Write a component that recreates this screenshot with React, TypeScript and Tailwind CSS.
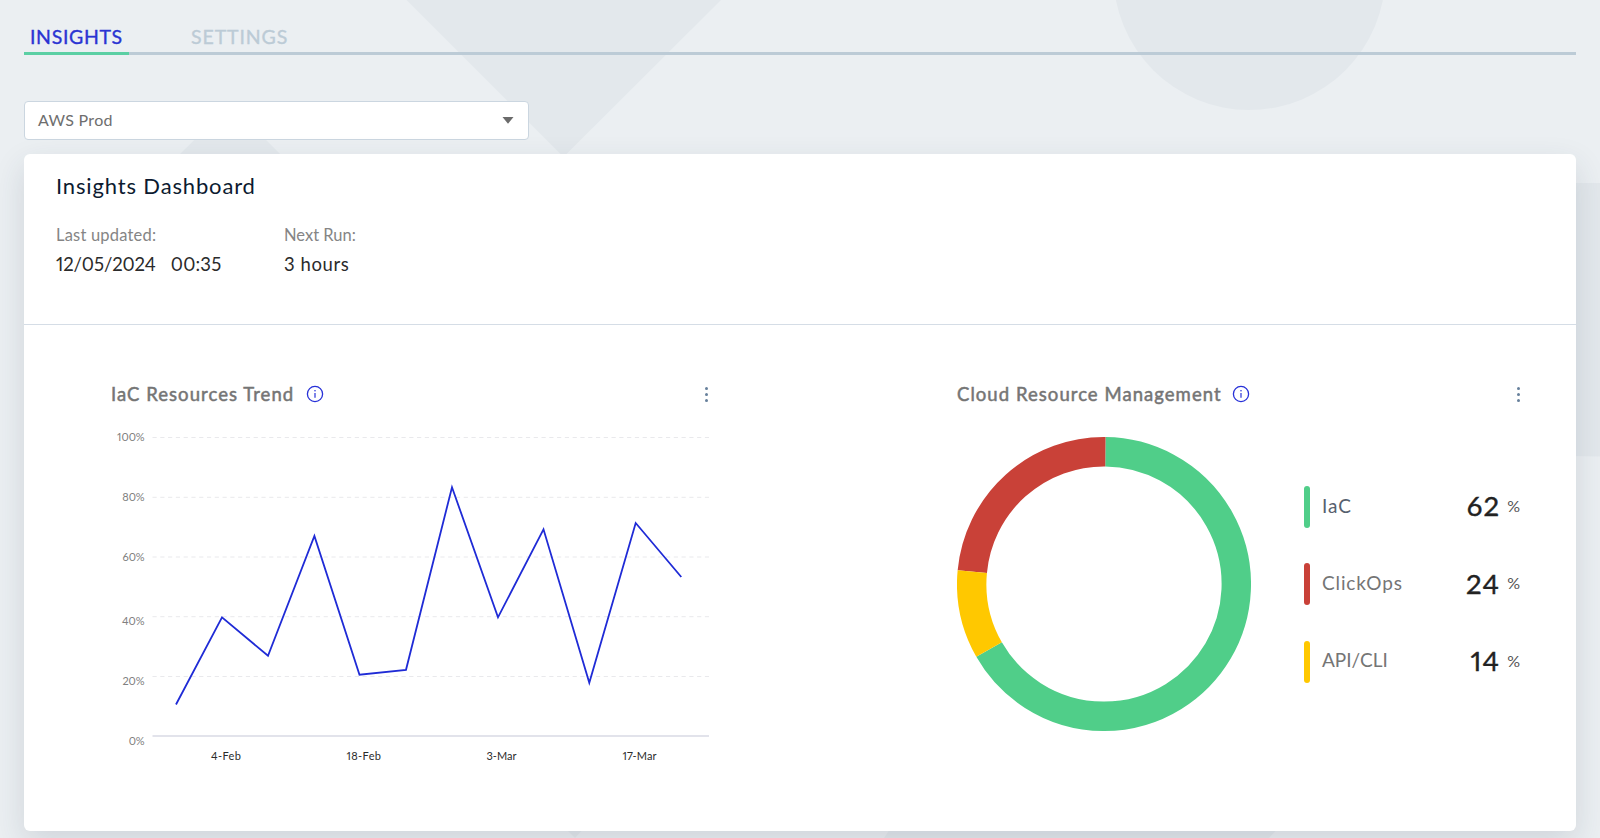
import { useState } from "react";

interface Slice {
  label: string;
  value: number;
  color: string;
  barClass: string;
  labelClass: string;
  from: number;
  to: number;
}

const tabs = [
  { name: "INSIGHTS", width: "w-[105px]", tracking: "tracking-[0.65px]" },
  { name: "SETTINGS", width: "w-[106px]", tracking: "tracking-[0.9px]" },
];

const slices: Slice[] = [
  {
    label: "IaC",
    value: 62,
    color: "#50ce89",
    barClass: "bg-[#50ce89]",
    labelClass: "text-[#56606e] tracking-[1px]",
    from: 0.6,
    to: 240.3,
  },
  {
    label: "ClickOps",
    value: 24,
    color: "#c94138",
    barClass: "bg-[#c94138]",
    labelClass: "text-[#757575] tracking-[0.85px]",
    from: 275.4,
    to: 360.6,
  },
  {
    label: "API/CLI",
    value: 14,
    color: "#ffc800",
    barClass: "bg-[#ffc800]",
    labelClass: "text-[#757575]",
    from: 240.3,
    to: 275.4,
  },
];

// Horizontal grid lines with the y of their labels
const gridLines = [
  { label: "100%", y: 437.5, textY: 441.3 },
  { label: "80%", y: 497.3, textY: 501 },
  { label: "60%", y: 557, textY: 560.7 },
  { label: "40%", y: 616.7, textY: 625 },
  { label: "20%", y: 676.5, textY: 685 },
];

const xLabels = [
  { label: "4-Feb", x: 211, width: 30 },
  { label: "18-Feb", x: 346.5, width: 34.5 },
  { label: "3-Mar", x: 486.5, width: 30 },
  { label: "17-Mar", x: 622.5, width: 34 },
];

const trend = [
  [176, 704.5],
  [222, 617.3],
  [268, 655.8],
  [314.4, 536],
  [359.5, 674.7],
  [406, 669.8],
  [452, 487.3],
  [498, 617.3],
  [543.5, 529.3],
  [589.3, 682.8],
  [635.7, 523],
  [681.3, 577],
];

const arc = (from: number, to: number, r: number) => {
  const point = (deg: number) => {
    const a = ((deg - 90) * Math.PI) / 180;
    return `${147 + r * Math.cos(a)} ${147 + r * Math.sin(a)}`;
  };
  return `M ${point(from)} A ${r} ${r} 0 ${to - from > 180 ? 1 : 0} 1 ${point(to)}`;
};

const Backdrop = () => (
  <svg
    className="absolute inset-0"
    width="1600"
    height="838"
    viewBox="0 0 1600 838"
    fill="#e3e8ec"
  >
    <path d="M406.5 0H721L563.5 157Z" />
    <path d="M230.5 104L285 159H175Z" />
    <circle cx="1249.4" cy="-26" r="136" />
    <path d="M1500 183H1600V456.5L1500 455Z" />
    <path d="M563 826H586L575 838Z" />
    <path d="M892 826H1280L1269 838H884Z" />
  </svg>
);

const InfoIcon = () => (
  <svg width="18" height="18" viewBox="0 0 18 18" fill="none" stroke="#2731d8">
    <circle cx="9" cy="9" r="7.6" strokeWidth="1.3" />
    <path d="M9 7.9V12.7" strokeWidth="1.2" />
    <circle cx="9" cy="5.7" r="0.8" fill="#2731d8" stroke="none" />
  </svg>
);

const MenuDots = () => (
  <button className="flex flex-col gap-[3px] w-[3px]">
    <span className="size-[3px] rounded-full bg-[#67809c]" />
    <span className="size-[3px] rounded-full bg-[#67809c]" />
    <span className="size-[3px] rounded-full bg-[#67809c]" />
  </button>
);

const TrendChart = () => (
  <svg width="600" height="340" viewBox="111 430 600 340">
    {gridLines.map((line) => (
      <g key={line.label}>
        <path
          d={`M152.5 ${line.y}H709`}
          stroke="#e9e9ec"
          strokeDasharray="4.2 3.58"
        />
        <text x="144.7" y={line.textY} textAnchor="end" fontSize="11" fill="#808080">
          {line.label}
        </text>
      </g>
    ))}
    <path d="M152.5 736H709" stroke="#d9dae4" strokeWidth="1.4" />
    <text x="144.7" y="744.5" textAnchor="end" fontSize="11" fill="#808080">
      0%
    </text>
    {xLabels.map((item) => (
      <text
        key={item.label}
        x={item.x}
        y="759.5"
        fontSize="11"
        textLength={item.width}
        fill="#2b2b2b"
      >
        {item.label}
      </text>
    ))}
    <polyline
      points={trend.map((p) => p.join(",")).join(" ")}
      fill="none"
      stroke="#1f2bd6"
      strokeWidth="1.8"
    />
  </svg>
);

const App = () => {
  const [activeTab, setActiveTab] = useState<string>("INSIGHTS");

  return (
    <div className="relative w-full h-[838px] overflow-hidden bg-[#ebeff2] font-['Lato',sans-serif] proportional-nums">
      <Backdrop />

      <div className="relative px-6">
        {/* Tabs */}
        <nav className="flex gap-[56px] pt-[22px] border-b-[3px] border-[#bccbd6]">
          {tabs.map((tab) => (
            <button
              key={tab.name}
              onClick={() => setActiveTab(tab.name)}
              className={`-mb-[3px] h-[33px] pl-[6px] pb-[3px] text-left text-[19.5px] leading-[30px] whitespace-nowrap border-b-[3px] [-webkit-text-stroke:0.35px_currentColor] ${tab.width} ${tab.tracking} ${
                activeTab === tab.name
                  ? "text-[#2a34d2] border-[#5bcfa4]"
                  : "text-[#bccbd6] border-transparent"
              }`}
            >
              {tab.name}
            </button>
          ))}
        </nav>

        {/* Account select */}
        <button className="mt-[46px] flex h-[39px] w-[505px] items-center justify-between rounded border border-[#cbd6e0] bg-white pl-[13px] pr-[14px] text-[16px] text-[#6e6e6e]">
          <span className="mb-[2px] tracking-[0.3px]">AWS Prod</span>
          <svg width="12" height="7" viewBox="0 0 12 7" fill="#6b6b6b">
            <path d="M0.5 0H11.5L6 6.8Z" />
          </svg>
        </button>

        <main className="mt-[14px] h-[677px] rounded-md bg-white shadow-[0_12px_32px_rgba(40,60,75,0.14)]">
          <header className="h-[171px] border-b border-[#d5dde6] px-8 pt-4">
            <h1 className="text-[22px] leading-8 tracking-[0.85px] text-[#0c1a30]">
              Insights Dashboard
            </h1>
            <div className="mt-[23px] flex">
              <div className="w-[228px]">
                <p className="text-[16.5px] leading-5 tracking-[0.2px] text-[#858585]">
                  Last updated:
                </p>
                <p className="mt-[7px] flex gap-[15px] text-[18.5px] leading-6 text-[#2b2b2b]">
                  <span className="tracking-[-0.1px]">12/05/2024</span>
                  <span className="tracking-[0.2px]">00:35</span>
                </p>
              </div>
              <div>
                <p className="text-[16.5px] leading-5 text-[#858585]">Next Run:</p>
                <p className="mt-[7px] text-[18.5px] leading-6 tracking-[0.6px] text-[#2b2b2b]">
                  3 hours
                </p>
              </div>
            </div>
          </header>

          <div className="flex justify-between pl-[87px] pr-14 pt-[57px]">
            {/* Trend */}
            <section className="w-[600px]">
              <div className="flex h-6 items-center pr-[3px]">
                <h2 className="mt-px w-[195px] whitespace-nowrap text-[18.5px] tracking-[1.05px] text-[#757575] [-webkit-text-stroke:0.5px_currentColor]">
                  IaC Resources Trend
                </h2>
                <InfoIcon />
                <div className="ml-auto">
                  <MenuDots />
                </div>
              </div>
              <div className="mt-6">
                <TrendChart />
              </div>
            </section>

            {/* Resource split */}
            <section className="w-[563px]">
              <div className="flex h-6 items-center">
                <h2 className="mt-px w-[275px] whitespace-nowrap text-[18.5px] tracking-[1.05px] text-[#757575] [-webkit-text-stroke:0.5px_currentColor]">
                  Cloud Resource Management
                </h2>
                <InfoIcon />
                <div className="ml-auto">
                  <MenuDots />
                </div>
              </div>
              <div className="mt-[31px] flex items-start justify-between">
                <svg width="294" height="294" viewBox="0 0 294 294" fill="none">
                  {slices.map((slice) => (
                    <path
                      key={slice.label}
                      d={arc(slice.from, slice.to, 132.3)}
                      stroke={slice.color}
                      strokeWidth="29.4"
                    />
                  ))}
                </svg>
                <ul className="mt-[49px] flex w-[216px] flex-col gap-[35.3px]">
                  {slices.map((slice) => (
                    <li key={slice.label} className="flex h-[42px] items-center">
                      <span className={`h-[42px] w-[6px] rounded-full ${slice.barClass}`} />
                      <span className={`mb-[2px] ml-3 text-[19px] ${slice.labelClass}`}>
                        {slice.label}
                      </span>
                      <span className="mb-[2px] ml-auto text-[27.5px] tracking-[1.2px] text-[#222222] [-webkit-text-stroke:0.4px_currentColor]">
                        {slice.value}
                      </span>
                      <span className="mb-[2px] ml-[7px] text-[16px] text-[#555555]">%</span>
                    </li>
                  ))}
                </ul>
              </div>
            </section>
          </div>
        </main>
      </div>
    </div>
  );
};

export default App;
